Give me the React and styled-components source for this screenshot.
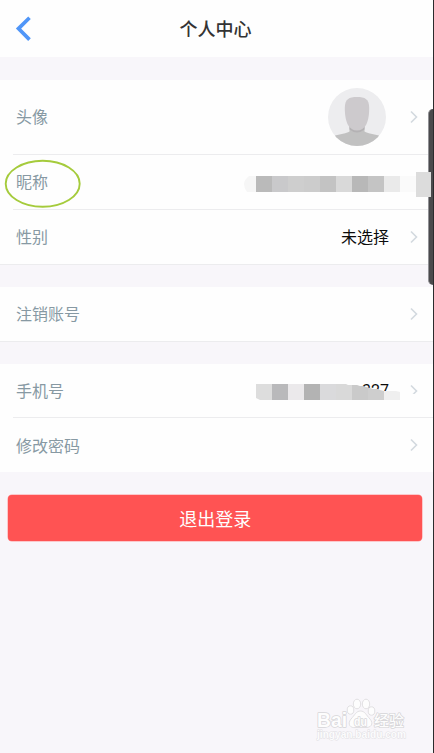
import React from 'react';
import styled, { createGlobalStyle } from 'styled-components';

const Colors = {
  white: '#fefefe',
  page: '#f8f6fa',
  label: '#8799a3',
  text: '#0c0c0c',
  line: '#ececee',
  blue: '#5096f8',
  red: '#ff5353',
  green: '#a5cb3c',
}

const GlobalStyle = createGlobalStyle`
  body {
    margin: 0;
    background: ${Colors.page};
    font-family: "Noto Sans CJK SC", "Noto Sans", sans-serif;
  }
`;

const Screen = styled.div`
  position: relative;
  box-sizing: border-box;
  width: 434px;
  height: 753px;
  border-right: 1px solid #2b2b2d;
  background: ${Colors.page};
  overflow: hidden;
`;

const Header = styled.div`
  display: grid;
  grid-template-columns: 48px 1fr 48px;
  align-items: center;
  height: 57px;
  margin-bottom: 23px;
  background: ${Colors.white};
`;

const BackButton = styled.div`
  display: flex;
  padding-left: 15px;
`;

const Title = styled.div`
  font-size: 18px;
  line-height: 26px;
  font-weight: 500;
  color: #333;
  text-align: center;
  padding-right: 2px;
  padding-bottom: 2px;
`;

const Group = styled.div`
  margin-bottom: ${props => props.gap || 22}px;
  background: ${Colors.white};
  ${props => props.bordered && `
    border-bottom: 1px solid ${Colors.line};
  `}
`;

const Row = styled.div`
  position: relative;
  display: flex;
  align-items: center;
  box-sizing: border-box;
  height: ${props => props.height || 54}px;
  padding: 0 15px 0 16px;
`;

const Divider = styled.div`
  height: 1px;
  margin-left: 13px;
  background: ${Colors.line};
`;

const Label = styled.div`
  flex: 1;
  padding-bottom: ${props => props.low ? 0 : 2}px;
  font-size: 16px;
  line-height: 24px;
  color: ${Colors.label};
`;

const Value = styled.div`
  margin-right: 20px;
  padding-bottom: 2px;
  font-size: 16px;
  line-height: 24px;
  color: ${Colors.text};
`;

const Digits = styled(Value)`
  font-family: Roboto, sans-serif;
  padding-bottom: 0;
`;

const AvatarWrap = styled.div`
  display: flex;
  margin-right: 23px;
`;

const Overlay = styled.svg`
  position: absolute;
  left: ${props => props.left}px;
  top: ${props => props.top}px;
`;

const LogoutButton = styled.div`
  height: 46px;
  line-height: 46px;
  margin: 0 11px 0 8.4px;
  box-sizing: border-box;
  border-radius: 4px;
  box-shadow: 0 0 0 0.5px #ff9a9c;
  background: ${Colors.red};
  font-size: 18px;
  text-align: center;
  color: ${Colors.white};
`;

const SidePanel = styled.div`
  position: absolute;
  top: 109px;
  right: 0;
  box-sizing: border-box;
  width: 5px;
  height: 176px;
  border-left: 1px solid #929296;
  border-radius: 5px 0 0 5px;
  background: #4a4a4c;
`;

const Handle = styled.div`
  position: absolute;
  top: 172px;
  left: 416px;
  width: 15px;
  height: 25px;
  background: #dcdcdc;
`;

const Arrow = () => (
  <svg width="9" height="14" viewBox="0 0 9 14" fill="none">
    <path d="M2 1.500L7.500 7L2 12.500" stroke="#d3d9df" strokeWidth="1.600" />
  </svg>
);

const Avatar = () => (
  <AvatarWrap>
    <svg width="58" height="58" viewBox="0 0 58 58">
      <defs>
        <clipPath id="face">
          <circle cx="29" cy="29" r="29" />
        </clipPath>
      </defs>
      <g clipPath="url(#face)">
        <rect width="58" height="58" fill="#ededef" />
        <path d="M21.500 36H36.500V43.500Q38 45 51 47.500V58H7V47.500Q20 45 21.500 43.500Z" fill="#c1c1c1" />
        <path d="M21.500 37H36.500V41.500Q29 47.500 21.500 41.500Z" fill="#b4b2b4" />
        <path d="M16.800 20C16.800 11 21 9 29 9S41.200 11 41.200 20C41.200 28 40 33 38 37C36 40.500 33 42.500 29 42.500S22 40.500 20 37C18 33 16.800 28 16.800 20Z" fill="#cdcacd" />
      </g>
    </svg>
  </AvatarWrap>
);

const nameBlocks = ['#bababa', '#c9c9cb', '#cecece', '#cccccc', '#c3c3c3', '#d9d9d9', '#b8b8b8', '#c4c4c4', '#eaeaea', '#fafafa'];
const phoneBlocks = ['#dddddd', '#b9b9bb', '#ebe9eb', '#b3b3b3', '#dadadc', '#d9d9d9', '#cacaca', '#cecece', '#efefef'];

const NameMosaic = () => (
  <Overlay left={244} top={20} width="172" height="18">
    <path d="M12 1H5Q0 5 0 9T3 17H12Z" fill="#f6f6f6" />
    {nameBlocks.map((color, i) => (
      <rect key={i} x={12 + i * 16} y="1" width="16" height="16" fill={color} />
    ))}
  </Overlay>
);

const PhoneMosaic = () => (
  <Overlay left={256} top={20} width="177" height="18">
    <defs>
      <clipPath id="smear">
        <path d="M0 0H90L92 1H101L104 2H107L110 3L114 4L117 5H122L124 6L128 7H140L144 8V16H4L0 14Z" />
      </clipPath>
    </defs>
    <path d="M90 3H108L130 8L144 8L150 9L177 12V18H90Z" fill={Colors.white} />
    <g clipPath="url(#smear)">
      {phoneBlocks.map((color, i) => (
        <rect key={i} x={i * 16} y="0" width="16" height="16" fill={color} />
      ))}
    </g>
  </Overlay>
);

const Circled = () => (
  <Overlay left={4} top={3} width="78" height="50">
    <ellipse cx="38.700" cy="25.800" rx="37" ry="23" fill="none" stroke={Colors.green} strokeWidth="1.900" />
  </Overlay>
);

const Watermark = () => (
  <Overlay left={312} top={694} width="110" height="52" fontFamily="Liberation Sans, Noto Sans CJK SC, sans-serif">
    <g fill="#fdfdfd" stroke="#dedddf" strokeWidth="0.900">
      <ellipse cx="38.500" cy="16" rx="3.300" ry="4.200" />
      <ellipse cx="45" cy="10" rx="3.700" ry="4.800" />
      <ellipse cx="54" cy="10" rx="3.700" ry="4.800" />
      <ellipse cx="59.500" cy="17" rx="3.300" ry="4.200" />
      <path d="M48.500 17C53 17 54 21 58 25C62 30 59 34 53 33.500H44C38 34.500 35 30 39 25C43 21 44 17 48.500 17Z" />
    </g>
    <g fill="#fdfdfd" stroke="#d6d5d8" strokeWidth="1.500" strokeLinejoin="round" paintOrder="stroke" fontWeight="700">
      <text x="5" y="32.500" fontSize="20" textLength="30" lengthAdjust="spacingAndGlyphs">Bai</text>
      <text x="42" y="31.500" fontSize="12" textLength="13" lengthAdjust="spacingAndGlyphs">du</text>
      <text x="62" y="32" fontSize="15" fontWeight="500">经验</text>
    </g>
    <text x="5" y="44" fontSize="10" fontWeight="700" fill="#fcfcfd" stroke="#dfdee2" strokeWidth="0.900" paintOrder="stroke" textLength="89" lengthAdjust="spacingAndGlyphs">jingyan.baidu.com</text>
  </Overlay>
);

const App = () => (
  <>
    <GlobalStyle />
    <Screen>
      <Header>
        <BackButton>
          <svg width="17" height="28" viewBox="0 0 17 28" fill="none">
            <path d="M14.500 2.800L3.500 13.600L14.500 24.600" stroke={Colors.blue} strokeWidth="3.700" />
          </svg>
        </BackButton>
        <Title>个人中心</Title>
      </Header>

      <Group bordered>
        <Row height={74}>
          <Label>头像</Label>
          <Avatar />
          <Arrow />
        </Row>
        <Divider />
        <Row>
          <Label>昵称</Label>
          <NameMosaic />
          <Circled />
        </Row>
        <Divider />
        <Row>
          <Label>性别</Label>
          <Value>未选择</Value>
          <Arrow />
        </Row>
      </Group>

      <Group bordered>
        <Row>
          <Label>注销账号</Label>
          <Arrow />
        </Row>
      </Group>

      <Group gap={23}>
        <Row height={53}>
          <Label>手机号</Label>
          <Digits>327</Digits>
          <Arrow />
          <PhoneMosaic />
        </Row>
        <Divider />
        <Row>
          <Label low>修改密码</Label>
          <Arrow />
        </Row>
      </Group>

      <LogoutButton>退出登录</LogoutButton>

      <SidePanel />
      <Handle />
      <Watermark />
    </Screen>
  </>
);

export default App;
